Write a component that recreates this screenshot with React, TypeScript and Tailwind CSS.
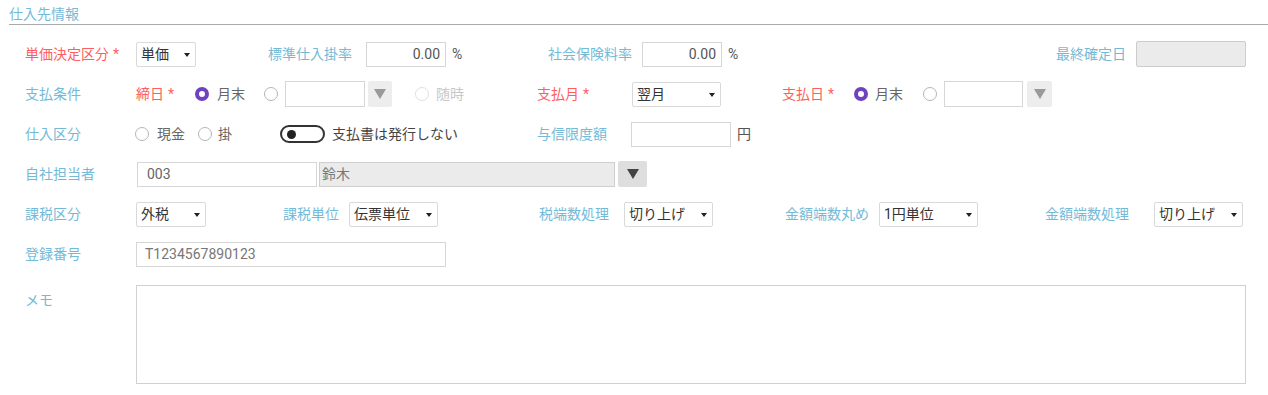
import React from "react";

const F = { fontFamily: '"Roboto", "Noto Sans CJK JP", sans-serif' };

function Label({ w, children, req, className = "" }: { w: string; children: React.ReactNode; req?: boolean; className?: string }) {
  return (
    <span className={`${w} shrink-0 whitespace-nowrap ${req ? "text-[#ff5e5e]" : "text-[#74bad7]"} ${className}`}>
      {children}
      {req && <span className="ml-[4px]">*</span>}
    </span>
  );
}

function Select({ w, value, className = "" }: { w: string; value: string; className?: string }) {
  return (
    <div className={`${w} ${className} relative h-[25px] shrink-0 rounded-[2px] border border-[#d9d9d9] bg-white pl-[4px] leading-[23px] text-[#333]`}>
      {value}
      <span className="absolute right-[5px] top-[10px] h-0 w-0 border-x-[3px] border-t-[4px] border-x-transparent border-t-[#222]" />
    </div>
  );
}

function Input({ w, value = "", right, gray, className = "" }: { w: string; value?: string; right?: boolean; gray?: boolean; className?: string }) {
  return (
    <div
      className={`${w} ${className} h-[25px] shrink-0 border ${gray ? "border-[#cfcfcf] bg-[#ebebeb] text-[#777]" : "border-[#d6d6d6] bg-white text-[#555]"} leading-[23px] ${right ? "pr-[5px] text-right" : "pl-[8px]"}`}
    >
      {value}
    </div>
  );
}

function Radio({ checked, disabled, className = "" }: { checked?: boolean; disabled?: boolean; className?: string }) {
  return (
    <span
      className={`${className} inline-block h-[14px] w-[14px] shrink-0 rounded-full bg-white ${
        checked ? "border-[4px] border-[#6f42c1]" : disabled ? "border border-[#e0e0e0]" : "border border-[#b5b5b5]"
      }`}
    />
  );
}

function DropBtn({ w, dark, className = "" }: { w: string; dark?: boolean; className?: string }) {
  return (
    <div className={`${w} ${className} flex h-[26px] shrink-0 items-center justify-center rounded-[2px] ${dark ? "bg-[#dedede]" : "bg-[#ededed]"}`}>
      <span
        className={`h-0 w-0 border-x-[6px] border-t-[10px] border-x-transparent ${dark ? "border-t-[#444]" : "border-t-[#9a9a9a]"}`}
      />
    </div>
  );
}

export default function App() {
  return (
    <div className="h-[395px] w-[1268px] overflow-hidden bg-white text-[14px]" style={F}>
      <div className="ml-[9px] h-[25px] border-b border-[#aaaaaa] pt-[5px] leading-[18px] text-[#74bad7]">仕入先情報</div>

      <div className="mt-[9px] pl-[25px]">
        {/* Row 1 */}
        <div className="flex h-[40px] items-center">
          <Label w="w-[111px]" req>単価決定区分</Label>
          <Select w="w-[60px]" value="単価" />
          <Label w="w-[98px]" className="ml-[72px]">標準仕入掛率</Label>
          <Input w="w-[80px]" value="0.00" right />
          <span className="w-[102px] shrink-0 pl-[6px] text-[#555]">%</span>
          <Label w="w-[94px]">社会保険料率</Label>
          <Input w="w-[80px]" value="0.00" right />
          <span className="w-[334px] shrink-0 pl-[6px] text-[#555]">%</span>
          <Label w="w-[80px]">最終確定日</Label>
          <div className="h-[26px] w-[110px] shrink-0 rounded-[2px] border border-[#cccccc] bg-[#ebebeb]" />
        </div>

        {/* Row 2 */}
        <div className="flex h-[40px] items-center">
          <Label w="w-[111px]">支払条件</Label>
          <Label w="w-[59px]" req>締日</Label>
          <Radio checked />
          <span className="ml-[8px] w-[28px] shrink-0 text-[#666]">月末</span>
          <Radio className="ml-[19px]" />
          <Input w="w-[80px]" className="ml-[7px] !h-[26px]" />
          <DropBtn w="w-[24px]" className="ml-[3px]" />
          <Radio disabled className="ml-[23px]" />
          <span className="ml-[7px] w-[101px] shrink-0 text-[#c8c8c8]">随時</span>
          <Label w="w-[95px]" req>支払月</Label>
          <Select w="w-[89px]" value="翌月" />
          <Label w="w-[72px]" req className="ml-[61px]">支払日</Label>
          <Radio checked />
          <span className="ml-[7px] w-[28px] shrink-0 text-[#666]">月末</span>
          <Radio className="ml-[20px]" />
          <Input w="w-[79px]" className="ml-[7px] !h-[26px]" />
          <DropBtn w="w-[25px]" className="ml-[4px]" />
        </div>

        {/* Row 3 */}
        <div className="flex h-[40px] items-center">
          <Label w="w-[110px]">仕入区分</Label>
          <Radio />
          <span className="ml-[8px] w-[28px] shrink-0 text-[#666]">現金</span>
          <Radio className="ml-[13px]" />
          <span className="ml-[6px] w-[14px] shrink-0 text-[#666]">掛</span>
          <div className="ml-[48px] flex h-[18px] w-[45px] shrink-0 items-center rounded-full border-2 border-[#333] pl-[5px]">
            <span className="h-[9px] w-[9px] rounded-full bg-[#222]" />
          </div>
          <span className="ml-[7px] w-[205px] shrink-0 text-[#444]">支払書は発行しない</span>
          <Label w="w-[94px]">与信限度額</Label>
          <Input w="w-[100px]" />
          <span className="ml-[6px] text-[#555]">円</span>
        </div>

        {/* Row 4 */}
        <div className="flex h-[40px] items-center">
          <Label w="w-[112px]">自社担当者</Label>
          <Input w="w-[180px]" value="003" className="!pl-[9px] !text-[#666]" />
          <Input w="w-[296px]" value="鈴木" gray className="ml-[2px] !pl-[2px]" />
          <DropBtn w="w-[29px]" dark className="ml-[3px]" />
        </div>

        {/* Row 5 */}
        <div className="flex h-[40px] items-center">
          <Label w="w-[111px]">課税区分</Label>
          <Select w="w-[70px]" value="外税" />
          <Label w="w-[66px]" className="ml-[77px]">課税単位</Label>
          <Select w="w-[89px]" value="伝票単位" />
          <Label w="w-[85px]" className="ml-[101px]">税端数処理</Label>
          <Select w="w-[89px]" value="切り上げ" />
          <Label w="w-[94px]" className="ml-[72px]">金額端数丸め</Label>
          <Select w="w-[99px]" value="1円単位" />
          <Label w="w-[109px]" className="ml-[67px]">金額端数処理</Label>
          <Select w="w-[89px]" value="切り上げ" />
        </div>

        {/* Row 6 */}
        <div className="flex h-[40px] items-center">
          <Label w="w-[111px]">登録番号</Label>
          <Input w="w-[310px]" value="T1234567890123" className="!text-[#777]" />
        </div>

        {/* Memo */}
        <div className="mt-[11px] flex items-start">
          <Label w="w-[111px]" className="pt-[5px] leading-[20px]">メモ</Label>
          <div className="h-[99px] w-[1110px] shrink-0 border border-[#d0d0d0] bg-white" />
        </div>
      </div>
    </div>
  );
}
